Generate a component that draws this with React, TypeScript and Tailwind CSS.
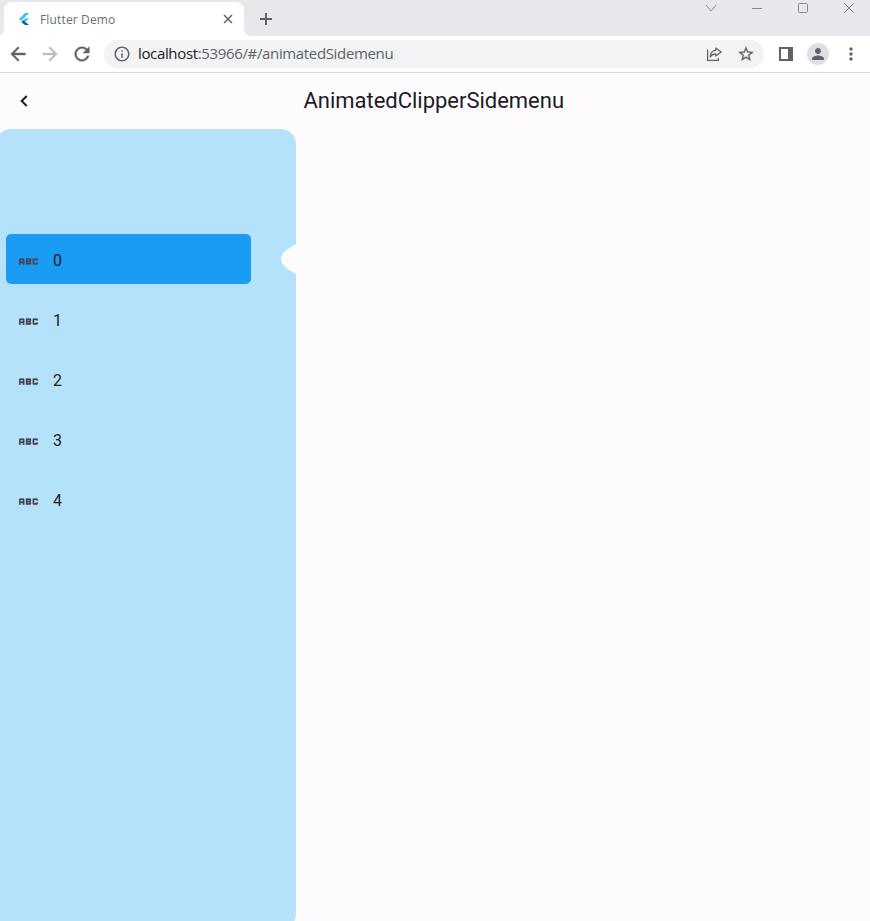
import React from "react";
import {
  MdAbc,
  MdArrowBack,
  MdArrowForward,
  MdInfoOutline,
  MdMoreVert,
  MdPerson,
  MdRefresh,
  MdStarBorder,
} from "react-icons/md";

const items = ["0", "1", "2", "3", "4"];

function FlutterLogo() {
  return (
    <svg width="10" height="12" viewBox="0 0 20 24" className="ml-[15px]">
      <path d="M12 0 L0 12 L4 16 L20 0 Z" fill="#45bdf5" />
      <path d="M12 11 L5 18 L8.5 21.5 L20 11 Z" fill="#45bdf5" />
      <path d="M8.5 14.5 L5 18 L12 24 L20 24 Z" fill="#0f5a9c" />
    </svg>
  );
}

function WindowControls() {
  return (
    <svg width="170" height="20" viewBox="0 0 170 20" className="ml-auto" fill="none" stroke="#85888c" strokeWidth="1">
      <path d="M6 5 L11 11 L16 5" />
      <path d="M52 8.5 H62" />
      <rect x="98.5" y="3.5" width="9" height="9" rx="1" />
      <path d="M144 3 L154 13 M154 3 L144 13" />
    </svg>
  );
}

function TabStrip() {
  return (
    <div className="flex h-9 bg-[#e7e8ec] pl-1">
      <div className="relative mt-0.5 flex h-[34px] w-60 items-center rounded-t-lg bg-white">
        <FlutterLogo />
        <span className="mt-0.5 ml-[11px] w-[178px] whitespace-nowrap text-[12px] leading-none tracking-[0.15px] text-[#6b6e72] [font-family:'Open_Sans','Noto_Sans',sans-serif]">
          Flutter Demo
        </span>
        <svg width="10" height="10" viewBox="0 0 10 10" className="ml-[5px] shrink-0" stroke="#5f6368" strokeWidth="1.5">
          <path d="M1 1 L9 9 M9 1 L1 9" />
        </svg>
        <svg width="8" height="8" viewBox="0 0 8 8" className="absolute bottom-0 -left-2">
          <path d="M8 0 V8 H0 A8 8 0 0 0 8 0" fill="#fff" />
        </svg>
        <svg width="8" height="8" viewBox="0 0 8 8" className="absolute -right-2 bottom-0">
          <path d="M0 0 V8 H8 A8 8 0 0 1 0 0" fill="#fff" />
        </svg>
      </div>
      <svg width="12" height="12" viewBox="0 0 12 12" className="mt-[13px] ml-4" stroke="#5f6368" strokeWidth="2">
        <path d="M6 0 V12 M0 6 H12" />
      </svg>
      <WindowControls />
    </div>
  );
}

function ShareIcon() {
  return (
    <svg width="16" height="14" viewBox="0 0 16 14" fill="none" stroke="#5f6368" strokeWidth="1.2">
      <path d="M1.6 2.5 V13.4 H12.4 V11" />
      <path d="M9.8 1 L15.2 5 L9.8 9 V6.8 C7.2 6.8 5.5 7.8 4.2 10 C4.5 6.3 6.5 3.6 9.8 3.2 Z" strokeLinejoin="round" />
    </svg>
  );
}

function Toolbar() {
  return (
    <div className="flex h-[37px] items-center border-b border-[#dadce0] bg-white pl-[7px] text-[#5f6368]">
      <MdArrowBack size={22} className="[&>path:first-child]:stroke-none" strokeWidth={0.5} />
      <MdArrowForward size={22} className="ml-2.5 text-[#bcbec1] [&>path:first-child]:stroke-none" strokeWidth={0.5} />
      <MdRefresh size={22} className="ml-2.5 [&>path:first-child]:stroke-none" strokeWidth={0.4} />
      <div className="ml-[11px] flex h-7 w-[660px] items-center rounded-full bg-[#f1f3f4] pl-[9px]">
        <MdInfoOutline size={18} />
        <span className="-mt-0.5 ml-[7px] whitespace-nowrap text-[15px] leading-none tracking-[-0.35px] [font-family:'Open_Sans','Noto_Sans',sans-serif]">
          <span className="text-[#202124]">localhost</span>:53966/#/animatedSidemenu
        </span>
        <span className="ml-auto flex items-center">
          <ShareIcon />
          <MdStarBorder size={18} className="mr-[9px] ml-[15px] [&>path:first-child]:stroke-none" strokeWidth={0.4} />
        </span>
      </div>
      <div className="ml-[15px] h-3.5 w-3.5 border-2 border-r-[5px] border-[#5f6368]" />
      <div className="ml-3.5 flex h-[22px] w-[22px] items-center justify-center rounded-full bg-[#dfdee5]">
        <MdPerson size={18} />
      </div>
      <MdMoreVert size={20} className="ml-[11.5px]" />
    </div>
  );
}

function SideMenu() {
  return (
    <nav className="relative -ml-1 h-[800px] w-[300px] shrink-0 rounded-[15px] bg-[#b4e2fb] pt-[105px] pl-2.5">
      <ul className="flex flex-col gap-2.5">
        {items.map((label, i) => (
          <li
            key={label}
            className={`flex h-[50px] w-[245px] items-center rounded-[5px] pl-[10px] text-[#1c1b1f] ${i === 0 ? "bg-[#1b9cf4]" : ""}`}
          >
            <MdAbc size={25} className="mt-[5px] text-[#49454f] [&>path:first-child]:stroke-none" strokeWidth={0.2} />
            <span className="mt-[3px] ml-3 text-base leading-none">{label}</span>
          </li>
        ))}
      </ul>
      <svg width="15" height="30" viewBox="0 0 15 30" className="absolute top-[115px] right-0">
        <path d="M15 0 Q0 7.5 0 15 Q0 22.5 15 30 Z" fill="#fefbff" />
      </svg>
    </nav>
  );
}

export default function App() {
  return (
    <div className="flex h-[921px] w-[870px] flex-col overflow-hidden bg-[#fefbff] [font-family:Roboto,sans-serif]">
      <TabStrip />
      <Toolbar />
      <header className="flex h-14 shrink-0 items-center">
        <svg width="8" height="12" viewBox="0 0 8 12" className="ml-5" fill="none" stroke="#1c1b1f" strokeWidth="2">
          <path d="M6.7 1 L1.7 6 L6.7 11" />
        </svg>
        <h1 className="ml-[275.5px] text-[22px] leading-7 tracking-[-0.02px] text-[#1c1b1f]">AnimatedClipperSidemenu</h1>
      </header>
      <main className="flex min-h-0 flex-1 items-start">
        <SideMenu />
      </main>
    </div>
  );
}
